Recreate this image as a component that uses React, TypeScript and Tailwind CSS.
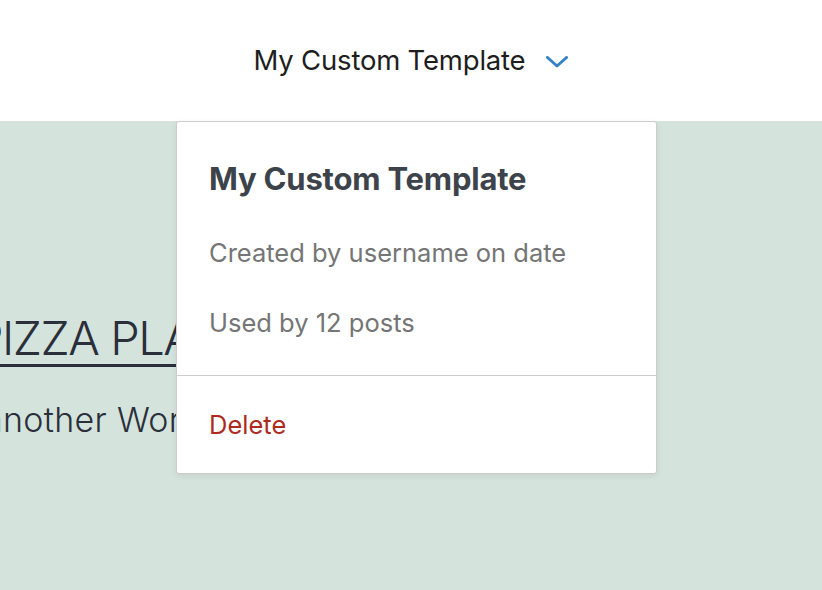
export default function App() {
  return (
    <div className="relative w-[822px] h-[590px] overflow-hidden bg-[#d5e3dd] font-['Inter',sans-serif]">
      {/* Top bar with template title */}
      <header className="h-[121px] bg-white flex items-center justify-center">
        <button className="flex items-center gap-[21px] text-[27.5px] text-[#1e1e1e] tracking-[-0.2px]">
          <span>My Custom Template</span>
          <svg width="22" height="12" viewBox="0 0 22 12" fill="none" className="mt-[2px]">
            <polyline points="1.5,1.5 11,10 20.5,1.5" stroke="#3582c4" strokeWidth="3" strokeLinecap="round" strokeLinejoin="round" />
          </svg>
        </button>
      </header>

      {/* Page content behind the popover */}
      <main className="pt-[193px] text-[#2a2f3a] whitespace-nowrap">
        <h1 className="ml-[-26px] text-[47px] font-light leading-none tracking-[-1.5px] underline decoration-[3px] underline-offset-[9px]">
          PIZZA PLACE
        </h1>
        <p className="ml-[-16px] mt-[42px] text-[34px] font-light leading-none tracking-[0.3px]">another WordPress site</p>
      </main>

      {/* Template details popover */}
      <div className="absolute left-[176px] top-[121px] w-[481px] bg-white border border-[#cccccc] rounded-[3px] shadow-[0_2px_6px_rgba(0,0,0,0.08)]">
        <div className="px-[32px] pt-[41px] pb-[40px]">
          <h2 className="text-[31px] font-bold text-[#3c434a] leading-none tracking-[-0.2px]">My Custom Template</h2>
          <p className="mt-[46px] text-[25.5px] text-[#757575] leading-none">Created by username on date</p>
          <p className="mt-[44px] text-[25.5px] text-[#757575] leading-none">Used by 12 posts</p>
        </div>
        <div className="border-t border-[#cccccc] px-[32px] pt-[36px] pb-[33px]">
          <button className="text-[25.5px] text-[#ad2a1f] leading-none">Delete</button>
        </div>
      </div>
    </div>
  )
}
